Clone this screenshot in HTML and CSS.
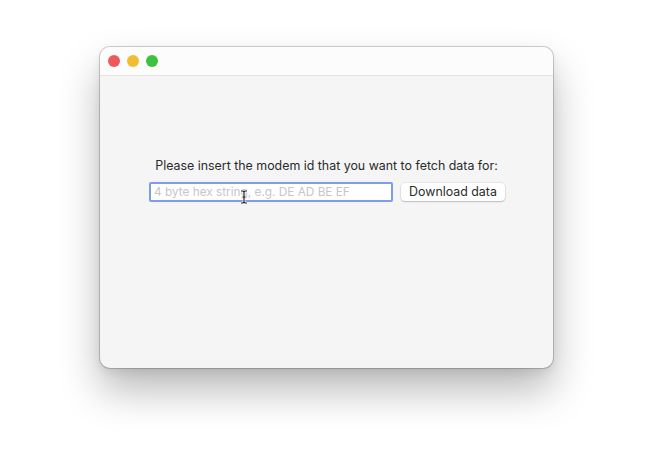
FILE: index.html
```html
<!DOCTYPE html>
<html>
<head>
<meta charset="utf-8">
<link rel="stylesheet" href="styles.css">
</head>
<body>
<div class="window">
  <div class="titlebar">
    <span class="light red"></span>
    <span class="light yellow"></span>
    <span class="light green"></span>
  </div>
  <div class="content">
    <p class="prompt">Please insert the modem id that you want to fetch data for:</p>
    <div class="row">
      <div class="field">
        <input class="input" type="text" placeholder="4 byte hex string, e.g. DE AD BE EF">
        <svg class="ibeam" width="8" height="14" viewBox="0 0 8 14">
          <path d="M1 1h2l1 1 1-1h2M4 2v10M1 13h2l1-1 1 1h2M2.5 7h3" fill="none" stroke="#fff" stroke-width="2.6"/>
          <path d="M1 1h2l1 1 1-1h2M4 2v10M1 13h2l1-1 1 1h2M2.5 7h3" fill="none" stroke="#222" stroke-width="1.2"/>
        </svg>
      </div>
      <button class="btn">Download data</button>
    </div>
  </div>
</div>
</body>
</html>
```
FILE: styles.css
```css
html, body {
  margin: 0;
  padding: 0;
  background: #ffffff;
}
body {
  box-sizing: border-box;
  min-height: 450px;
  padding: 47px 0 0 100px;
  font-family: Inter, "Liberation Sans", sans-serif;
}
.window {
  width: 453px;
  height: 321px;
  border-radius: 10px;
  background: #f5f5f5;
  box-shadow: 0 0 0 1px rgba(0,0,0,0.18), 0 22px 40px rgba(0,0,0,0.28), 0 4px 10px rgba(0,0,0,0.08);
  overflow: hidden;
  display: flex;
  flex-direction: column;
}
.titlebar {
  height: 28px;
  background: #fcfcfc;
  border-bottom: 1px solid #e3e3e3;
  display: flex;
  align-items: center;
  padding-left: 8px;
  gap: 7px;
  flex-shrink: 0;
}
.light {
  width: 12px;
  height: 12px;
  border-radius: 50%;
}
.red { background: #ee5a5b; }
.yellow { background: #f3bd31; }
.green { background: #3ec23e; }
.content {
  display: flex;
  flex-direction: column;
  align-items: center;
  padding-top: 82px;
}
.prompt {
  margin: 0;
  font-size: 12.4px;
  color: #2a2a2a;
  line-height: 16px;
}
.row {
  display: flex;
  align-items: center;
  gap: 8px;
  margin-top: 8px;
  padding-left: 1px;
}
.field {
  position: relative;
}
.input {
  box-sizing: border-box;
  width: 244px;
  height: 20px;
  border: 2.5px solid #7d9de4;
  border-radius: 2px;
  background: #ffffff;
  padding: 0 3px;
  font-family: Inter, "Liberation Sans", sans-serif;
  font-size: 11.8px;
  outline: none;
  display: block;
}
.input::placeholder {
  color: #c6c6c6;
}
.ibeam {
  position: absolute;
  left: 91px;
  top: 8px;
}
.btn {
  height: 18px;
  width: 104px;
  border: none;
  border-radius: 4px;
  background: #ffffff;
  box-shadow: 0 0 0 0.5px rgba(0,0,0,0.12), 0 1px 1.5px rgba(0,0,0,0.18);
  font-family: Inter, "Liberation Sans", sans-serif;
  font-size: 12.4px;
  color: #2a2a2a;
  padding: 0;
  margin-top: -1px;
}
```
